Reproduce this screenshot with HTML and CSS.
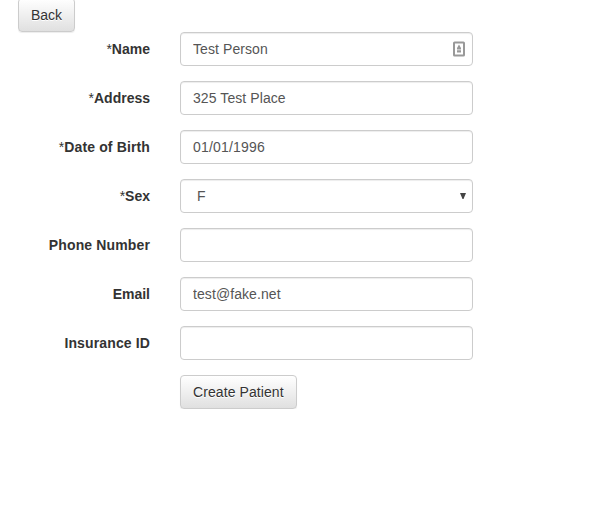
FILE: index.html
```html
<!DOCTYPE html>
<html lang="en">
<head>
<meta charset="utf-8">
<title>Create Patient</title>
<link rel="stylesheet" href="styles.css">
</head>
<body>
<a class="btn back" href="#">Back</a>
<form class="form">
<label for="name"><span class="star">*</span>Name</label>
<div class="field"><input id="name" class="control" value="Test Person">
<svg class="autofill" width="12" height="16" viewBox="0 0 12 16"><rect x="1" y="1.5" width="10" height="13" rx="0.6" fill="#fff" stroke="#999" stroke-width="2"/><path d="M6 3.5L8 7v1.5H4V7zM4 9.2h4v2.3H4z" fill="#999"/></svg></div>
<label for="address"><span class="star">*</span>Address</label>
<input id="address" class="control" value="325 Test Place">
<label class="wide" for="dob"><span class="star">*</span>Date of Birth</label>
<input id="dob" class="control date" value="01/01/1996">
<label for="sex"><span class="star">*</span>Sex</label>
<div class="field"><select id="sex" class="control select"><option>F</option><option>M</option></select>
<svg class="arrow" width="6" height="6" viewBox="0 0 6 6"><path d="M0 0h6L3.5 6h-1z" fill="#444"/></svg></div>
<label class="wide" for="phone">Phone Number</label>
<input id="phone" class="control">
<label for="email">Email</label>
<input id="email" class="control" value="test@fake.net">
<label class="wide" for="insurance">Insurance ID</label>
<input id="insurance" class="control">
<button class="btn submit" type="button">Create Patient</button>
</form>
</body>
</html>
```
FILE: styles.css
```css
* { box-sizing: border-box; }
html { overflow: hidden; }
body {
  margin: 0;
  background: #fff;
  color: #333;
  font: 14px/20px "Liberation Sans", Arial, sans-serif;
}
.btn {
  display: block;
  width: max-content;
  height: 34px;
  padding: 6px 12px;
  border: 1px solid #ccc;
  border-radius: 4px;
  background: linear-gradient(#fff, #e0e0e0);
  box-shadow: inset 0 1px 0 rgba(255,255,255,.15), 0 1px 1px rgba(0,0,0,.075);
  color: #333;
  font: inherit;
  text-decoration: none;
  text-shadow: 0 1px 0 #fff;
}
.back { margin: -2px 0 0 18px; }
.form {
  display: grid;
  grid-template-columns: 150px 293px;
  column-gap: 30px;
  row-gap: 15px;
  grid-auto-rows: 34px;
}
label { padding-top: 7px; text-align: right; font-weight: bold; }
.wide { letter-spacing: .13px; }
.star { font-weight: normal; }
.field { position: relative; }
.control {
  display: block;
  width: 100%;
  height: 34px;
  padding: 6px 12px;
  border: 1px solid #ccc;
  border-radius: 4px;
  background: #fff;
  box-shadow: inset 0 1px 1px rgba(0,0,0,.075);
  color: #555;
  font: inherit;
  letter-spacing: .08px;
  outline: 0;
}
.date { letter-spacing: .2px; }
.select { appearance: none; padding-left: 16px; }
.autofill { position: absolute; right: 8px; top: 9px; }
.arrow { position: absolute; right: 7px; top: 14px; }
.submit { grid-column: 2; letter-spacing: .08px; }
```
